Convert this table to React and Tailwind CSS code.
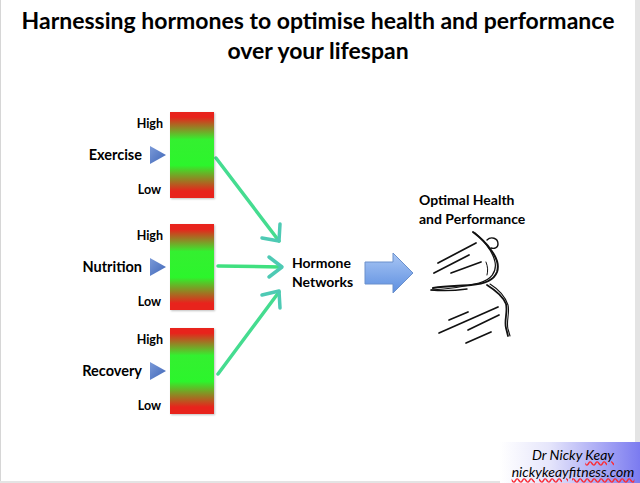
const factors = [
  { name: "Exercise", mt: "mt-[112px]" },
  { name: "Nutrition", mt: "mt-[26px]" },
  { name: "Recovery", mt: "mt-[18px]" },
];

const Factor = ({ name, mt }) => (
  <div className={`flex ${mt}`}>
    <div className="w-[90px] h-[86px] flex flex-col items-end text-black">
      <span className="h-[24px] flex items-center text-[12.5px] font-bold pr-[4px]">High</span>
      <div className="h-[38px] flex items-center gap-[7px]">
        <span className="text-[14.5px] font-bold leading-[20px]">{name}</span>
        <svg width="18" height="20" viewBox="0 0 18 20">
          <defs>
            <linearGradient id={`tri-${name}`} x1="0" y1="0" x2="1" y2="1">
              <stop offset="0" stopColor="#7b9ad8" />
              <stop offset="1" stopColor="#3f66b8" />
            </linearGradient>
          </defs>
          <polygon points="1,1 17,10 1,19" fill={`url(#tri-${name})`} />
        </svg>
      </div>
      <span className="h-[24px] flex items-end text-[12.5px] font-bold leading-[16px] pr-[6px]">Low</span>
    </div>
    <div className="ml-[3px] w-[44px] h-[86px] bg-[linear-gradient(to_bottom,#e8231c_0%,#e8231c_6%,#34f030_32%,#2cf52c_62%,#e8231c_92%,#e8231c_100%)] shadow-[1px_1px_2px_rgba(0,0,0,0.25)]" />
  </div>
);

const Overlay = () => (
  <svg className="absolute inset-0" width="635" height="481" viewBox="0 0 635 481">
    <defs>
      <linearGradient id="big" x1="0" y1="0" x2="0" y2="1">
        <stop offset="0" stopColor="#a9c6f4" />
        <stop offset="1" stopColor="#5d8fe0" />
      </linearGradient>
    </defs>
    <g strokeWidth="3.5" fill="none" strokeLinecap="round" strokeLinejoin="round">
      <line x1="215" y1="158" x2="278" y2="241" stroke="#45dc90" />
      <polyline points="279,224 278,241 261,238" stroke="#4ecab4" />
      <line x1="217" y1="266" x2="280" y2="267" stroke="#40e080" />
      <polyline points="268,257 281,267 268,277" stroke="#4ecab4" />
      <line x1="217" y1="374" x2="278" y2="292" stroke="#45dc90" />
      <polyline points="261,295 278,291 279,308" stroke="#4ecab4" />
    </g>
    <polygon
      points="364,262 392,262 392,253 412,273 392,293 392,284 364,284"
      fill="url(#big)"
      stroke="#6a90cc"
      strokeWidth="1"
    />
    <g stroke="#111" fill="none" strokeLinecap="round" strokeLinejoin="round">
      {/* speed lines */}
      <path d="M437 263 L475 243" strokeWidth="1.7" />
      <path d="M433 273 L468 255" strokeWidth="1.7" />
      <path d="M450 273 L480 262" strokeWidth="1.7" />
      <path d="M448 320 L467 312" strokeWidth="1.7" />
      <path d="M438 333 L497 307" strokeWidth="1.7" />
      <path d="M467 330 L498 315" strokeWidth="1.7" />
      <path d="M465 343 L490 332" strokeWidth="1.7" />
      {/* dancer */}
      <path d="M472 232 C480 238 486 244 490 250 C496 258 498 266 496 272 C493 280 484 284 470 285 C458 286 445 286 432 288" strokeWidth="2" />
      <path d="M474 233 C483 241 492 252 494 262 C496 272 490 280 478 283 C462 287 446 289 430 290" strokeWidth="1.2" />
      <path d="M430 290 C440 291 452 291 466 289" strokeWidth="1.4" />
      <path d="M486 240 C490 236 497 238 497 244 C497 248 493 249 490 248" strokeWidth="1.4" />
      <path d="M485 262 C487 267 487 271 486 275" strokeWidth="1" />
      <path d="M486 285 C494 290 502 296 505 304 C507 312 503 320 505 328 L507 336" strokeWidth="1.8" />
      <path d="M489 284 C497 289 504 296 507 305 C509 313 505 321 507 329 L509 336" strokeWidth="1.1" />
    </g>
  </svg>
);

export default function App() {
  return (
    <div className="w-[640px] h-[483px] bg-[#e4e4e4] overflow-hidden font-['Lato','Open_Sans',sans-serif]">
      <div className="relative w-[635px] h-[481px] bg-white border-l border-[#d6d6d6]">
        <Overlay />
        <h1 className="relative pt-[5px] text-center text-[23px] font-bold leading-[30px] text-black">
          Harnessing hormones to optimise health and performance
          <br />
          over your lifespan
        </h1>
        <div className="absolute left-[76px] top-0 flex flex-col">
          {factors.map((f) => (
            <Factor key={f.name} {...f} />
          ))}
        </div>
        <div className="absolute left-[291px] top-[253px] text-[14px] font-bold leading-[19px] text-black">
          Hormone
          <br />
          Networks
        </div>
        <div className="absolute left-[418px] top-[190px] text-[14px] font-bold leading-[19px] text-black">
          Optimal Health
          <br />
          and Performance
        </div>
      </div>
      <div className="absolute left-[500px] top-[442px] w-[140px] h-[41px] bg-[linear-gradient(to_right,#ffffff_0%,#e6e6fb_35%,#7b7bf0_100%)] flex flex-col items-center justify-center text-[14px] italic leading-[17px] text-black">
        <span className="pl-[6px]">
          Dr Nicky <span className="underline decoration-wavy decoration-red-500">Keay</span>
        </span>
        <span className="pl-[6px] underline decoration-wavy decoration-red-500">nickykeayfitness.com</span>
      </div>
    </div>
  );
}
